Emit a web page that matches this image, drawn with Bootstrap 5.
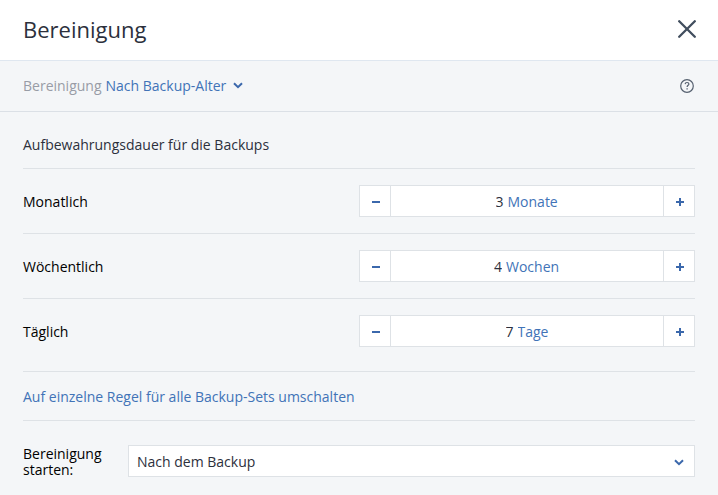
<!DOCTYPE html>
<html lang="de">
<head>
<meta charset="utf-8">
<meta name="viewport" content="width=device-width, initial-scale=1">
<title>Bereinigung</title>
<link href="https://cdn.jsdelivr.net/npm/bootstrap@5.3.0/dist/css/bootstrap.min.css" rel="stylesheet">
<style>
  :root {
    --ink: #2c303c;
    --link: #4173b7;
    --line: #dee2e6;
    --chevron: url("data:image/svg+xml,%3Csvg xmlns='http://www.w3.org/2000/svg' viewBox='0 0 10 7'%3E%3Cpath d='M1 1.2l4 4 4-4' fill='none' stroke='%233b68ac' stroke-width='2'/%3E%3C/svg%3E");
  }
  body {
    background: #f4f6f8;
    color: #000;
    font: 14px/20px "Open Sans", sans-serif;
  }
  .gutter { padding-left: 23px; padding-right: 23px; }
  .panel-head { height: 61px; border-bottom: 1px solid #dfe7f0; }
  .panel-title { font-size: 22px; line-height: 30px; padding-bottom: 2px; font-weight: 400; color: var(--ink); }
  .panel-filter { height: 51px; border-bottom: 1px solid #dbe0e6; }
  .filter-label { color: #989ca6; }
  .icon-btn { padding: 0; border: 0; background: none; line-height: 0; }
  .close-btn { margin-right: -2px; }

  .plain-select {
    width: auto;
    padding: 0;
    border: 0;
    border-radius: 0;
    background-color: transparent;
    background-image: none;
    color: var(--link);
    font-size: 14px;
    line-height: 20px;
  }
  .filter-select {
    padding-right: 16px;
    background: var(--chevron) right 6px / 10px 7px no-repeat;
  }

  .ruled { border-bottom: 1px solid var(--line); }
  .section-title { font-size: 14px; line-height: 20px; font-weight: 400; color: var(--ink); padding: 23px 0 13px; }
  .rule-row { padding: 16px 0; }
  .rule-row.last-rule { padding-bottom: 24px; }
  .rule-label, .step-field { padding-top: 2px; }

  .stepper { height: 32px; border: 1px solid var(--line); background: #fff; }
  .step-btn { width: 31px; padding: 2px 0 0; border: 0 solid var(--line); background: #fff; line-height: 0; }
  .step-btn:first-child { padding-left: 2px; border-right-width: 1px; }
  .step-btn:last-child { padding-left: 1px; border-left-width: 1px; }
  .step-value { width: 8px; padding: 0; border: 0; color: var(--ink); background: none; line-height: 20px; }

  .switch-row { padding: 15px 0 13px; }
  .switch-row a { color: var(--link); }
  .start-row { padding: 23px 0 16px; }
  .start-label { width: 105px; padding-top: 2px; line-height: 16px; }
  .start-select {
    height: 32px;
    padding: 2px 32px 0 8px;
    border: 1px solid var(--line);
    border-radius: 0;
    color: var(--ink);
    font-size: 14px;
    line-height: 20px;
    background: #fff var(--chevron) right 10px top 13px / 10px 7px no-repeat;
  }
</style>
</head>
<body>
<header class="panel-head gutter bg-white d-flex align-items-center justify-content-between">
  <h1 class="panel-title mb-0">Bereinigung</h1>
  <button type="button" class="icon-btn close-btn" aria-label="Schließen">
    <svg width="20" height="20" viewBox="0 0 20 20" fill="none" stroke="#414e5e" stroke-width="2.3" stroke-linecap="round"><path d="M2.200 1.200l15.600 15.600M17.800 1.200L2.200 16.800"/></svg>
  </button>
</header>

<div class="panel-filter gutter d-flex align-items-center justify-content-between">
  <div class="d-flex gap-1">
    <label class="filter-label" for="mode">Bereinigung</label>
    <select id="mode" class="form-select plain-select filter-select"><option>Nach Backup-Alter</option></select>
  </div>
  <button type="button" class="icon-btn" aria-label="Hilfe">
    <svg width="16" height="16" viewBox="0 0 16 16" fill="none" stroke="#566170"><circle cx="8" cy="8" r="6.3" stroke-width="1.2"/><path d="M6.1 6.1c.1-1 .9-1.6 1.9-1.6 1.100 0 1.900.6 1.900 1.500 0 1.300-1.800 1.400-1.800 3" stroke-width="1.200"/><path d="M8.100 10.200v1.300" stroke-width="1.300"/></svg>
  </button>
</div>

<main class="gutter">
  <h2 class="section-title ruled mb-0">Aufbewahrungsdauer für die Backups</h2>

  <div class="rule-row ruled row g-0 align-items-center">
    <label class="col-6 rule-label" for="monthly">Monatlich</label>
    <div class="col-6 stepper d-flex">
      <button type="button" class="step-btn" aria-label="Monate verringern"><svg width="8" height="8" viewBox="0 0 8 8" fill="#3b68ac"><path d="M0 3h8v2H0z"/></svg></button>
      <div class="step-field flex-grow-1 d-flex align-items-center justify-content-center gap-1">
        <input id="monthly" class="step-value" type="text" inputmode="numeric" value="3">
        <select class="form-select plain-select" aria-label="Einheit monatlich"><option>Monate</option></select>
      </div>
      <button type="button" class="step-btn" aria-label="Monate erhöhen"><svg width="8" height="8" viewBox="0 0 8 8" fill="#3b68ac"><path d="M0 3h3V0h2v3h3v2H5v3H3V5H0z"/></svg></button>
    </div>
  </div>

  <div class="rule-row ruled row g-0 align-items-center">
    <label class="col-6 rule-label" for="weekly">Wöchentlich</label>
    <div class="col-6 stepper d-flex">
      <button type="button" class="step-btn" aria-label="Wochen verringern"><svg width="8" height="8" viewBox="0 0 8 8" fill="#3b68ac"><path d="M0 3h8v2H0z"/></svg></button>
      <div class="step-field flex-grow-1 d-flex align-items-center justify-content-center gap-1">
        <input id="weekly" class="step-value" type="text" inputmode="numeric" value="4">
        <select class="form-select plain-select" aria-label="Einheit wöchentlich"><option>Wochen</option></select>
      </div>
      <button type="button" class="step-btn" aria-label="Wochen erhöhen"><svg width="8" height="8" viewBox="0 0 8 8" fill="#3b68ac"><path d="M0 3h3V0h2v3h3v2H5v3H3V5H0z"/></svg></button>
    </div>
  </div>

  <div class="rule-row last-rule ruled row g-0 align-items-center">
    <label class="col-6 rule-label" for="daily">Täglich</label>
    <div class="col-6 stepper d-flex">
      <button type="button" class="step-btn" aria-label="Tage verringern"><svg width="8" height="8" viewBox="0 0 8 8" fill="#3b68ac"><path d="M0 3h8v2H0z"/></svg></button>
      <div class="step-field flex-grow-1 d-flex align-items-center justify-content-center gap-1">
        <input id="daily" class="step-value" type="text" inputmode="numeric" value="7">
        <select class="form-select plain-select" aria-label="Einheit täglich"><option>Tage</option></select>
      </div>
      <button type="button" class="step-btn" aria-label="Tage erhöhen"><svg width="8" height="8" viewBox="0 0 8 8" fill="#3b68ac"><path d="M0 3h3V0h2v3h3v2H5v3H3V5H0z"/></svg></button>
    </div>
  </div>

  <div class="switch-row ruled"><a href="#" class="text-decoration-none">Auf einzelne Regel für alle Backup-Sets umschalten</a></div>

  <div class="start-row d-flex align-items-center">
    <label class="start-label flex-shrink-0" for="start">Bereinigung starten:</label>
    <select id="start" class="form-select start-select"><option>Nach dem Backup</option></select>
  </div>
</main>
<script src="https://cdn.jsdelivr.net/npm/bootstrap@5.3.0/dist/js/bootstrap.bundle.min.js"></script>
</body>
</html>
